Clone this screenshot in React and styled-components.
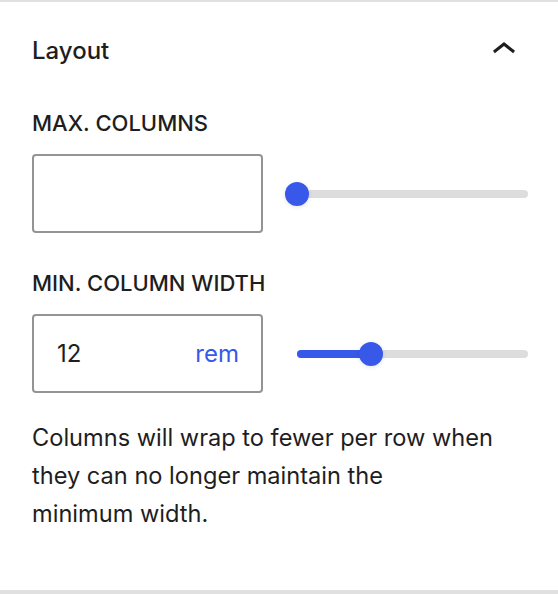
import React, { useState } from 'react'
import styled, { createGlobalStyle } from 'styled-components'

const GlobalStyle = createGlobalStyle`
  html, body {
    margin: 0;
    padding: 0;
    background: #fff;
  }
  body {
    font-family: Inter, "Noto Sans", "Liberation Sans", sans-serif;
    color: #1e1e1e;
    -webkit-font-smoothing: antialiased;
  }
`

const ACCENT = '#3858e9'

const ChevronUp = () => (
  <svg width="48" height="48" viewBox="0 0 24 24" aria-hidden="true">
    <path d="M6.5 12.4L12 8l5.5 4.4-.9 1.2L12 10l-4.6 3.6-.9-1.2z" fill="#1e1e1e" />
  </svg>
)

const RangeControl = ({ value, onChange }) => {
  const pct = value == null ? 0 : value
  return (
    <SliderWrap>
      <Track>
        {value != null && <Fill style={{ width: `${pct}%` }} />}
        <Thumb style={{ left: `${pct}%` }} />
      </Track>
      <HiddenRange
        type="range"
        min="0"
        max="100"
        value={pct}
        onChange={e => onChange(Number(e.target.value))}
      />
    </SliderWrap>
  )
}

const App = () => {
  const [open, setOpen] = useState(true)
  const [maxCols, setMaxCols] = useState(null)
  const [minWidth, setMinWidth] = useState(32)

  return (
    <>
      <GlobalStyle />
      <Panel>
        <PanelHeader onClick={() => setOpen(!open)}>
          <Title>Layout</Title>
          <IconButton>
            <ChevronUp />
          </IconButton>
        </PanelHeader>
        {open && (
          <PanelBody>
            <Field>
              <Label>Max. columns</Label>
              <ControlRow>
                <InputBox>
                  <NumberInput value={maxCols == null ? '' : maxCols} readOnly />
                </InputBox>
                <RangeControl value={maxCols} onChange={setMaxCols} />
              </ControlRow>
            </Field>
            <Field>
              <Label>Min. column width</Label>
              <ControlRow>
                <InputBox>
                  <NumberInput value="12" readOnly />
                  <Unit>rem</Unit>
                </InputBox>
                <RangeControl value={minWidth} onChange={setMinWidth} />
              </ControlRow>
            </Field>
            <Help>
              Columns will wrap to fewer per row when they can no longer maintain the
              <br />
              minimum width.
            </Help>
          </PanelBody>
        )}
      </Panel>
    </>
  )
}

const Panel = styled.div`
  width: 558px;
  height: 594px;
  box-sizing: border-box;
  border-top: 2px solid #e0e0e0;
  border-bottom: 4px solid #e0e0e0;
`

const PanelHeader = styled.div`
  height: 96px;
  display: flex;
  align-items: center;
  justify-content: space-between;
  padding: 0 30px 0 32px;
  cursor: pointer;
`

const Title = styled.h2`
  margin: 0;
  font-size: 24px;
  font-weight: 500;
  color: #1e1e1e;
`

const IconButton = styled.button`
  border: none;
  background: none;
  padding: 0;
  width: 48px;
  height: 48px;
  display: flex;
  cursor: pointer;
`

const PanelBody = styled.div`
  padding: 9px 30px 0 32px;
  display: flex;
  flex-direction: column;
`

const Field = styled.div`
  display: flex;
  flex-direction: column;
  margin-bottom: 34px;

  & + & {
    margin-bottom: 26px;
  }
`

const Label = styled.label`
  font-size: 22px;
  font-weight: 500;
  text-transform: uppercase;
  line-height: 32px;
  margin-bottom: 15px;
`

const ControlRow = styled.div`
  display: flex;
  align-items: center;
  gap: 22px;
`

const InputBox = styled.div`
  box-sizing: border-box;
  width: 231px;
  height: 79px;
  border: 2px solid #949494;
  border-radius: 4px;
  display: flex;
  align-items: center;
  padding: 0 22px 0 23px;
`

const NumberInput = styled.input`
  border: none;
  outline: none;
  background: transparent;
  flex: 1;
  min-width: 0;
  padding: 0;
  font-family: inherit;
  font-size: 24px;
  color: #1e1e1e;
`

const Unit = styled.span`
  font-size: 24px;
  color: ${ACCENT};
`

const SliderWrap = styled.div`
  position: relative;
  flex: 1;
  height: 48px;
  padding-left: 12px;
  display: flex;
  align-items: center;
`

const Track = styled.div`
  position: relative;
  flex: 1;
  height: 8px;
  border-radius: 4px;
  background: #ddd;
`

const Fill = styled.div`
  position: absolute;
  left: 0;
  top: 0;
  bottom: 0;
  border-radius: 4px;
  background: ${ACCENT};
`

const Thumb = styled.div`
  position: absolute;
  top: 50%;
  width: 24px;
  height: 24px;
  border-radius: 50%;
  background: ${ACCENT};
  transform: translate(-50%, -50%);
  box-shadow: 0 1px 4px rgba(0, 0, 0, 0.12);
`

const HiddenRange = styled.input`
  position: absolute;
  inset: 0;
  width: 100%;
  margin: 0;
  opacity: 0;
  cursor: pointer;
`

const Help = styled.p`
  margin: 0;
  font-size: 23.6px;
  line-height: 38px;
  color: #1e1e1e;
`

export default App
